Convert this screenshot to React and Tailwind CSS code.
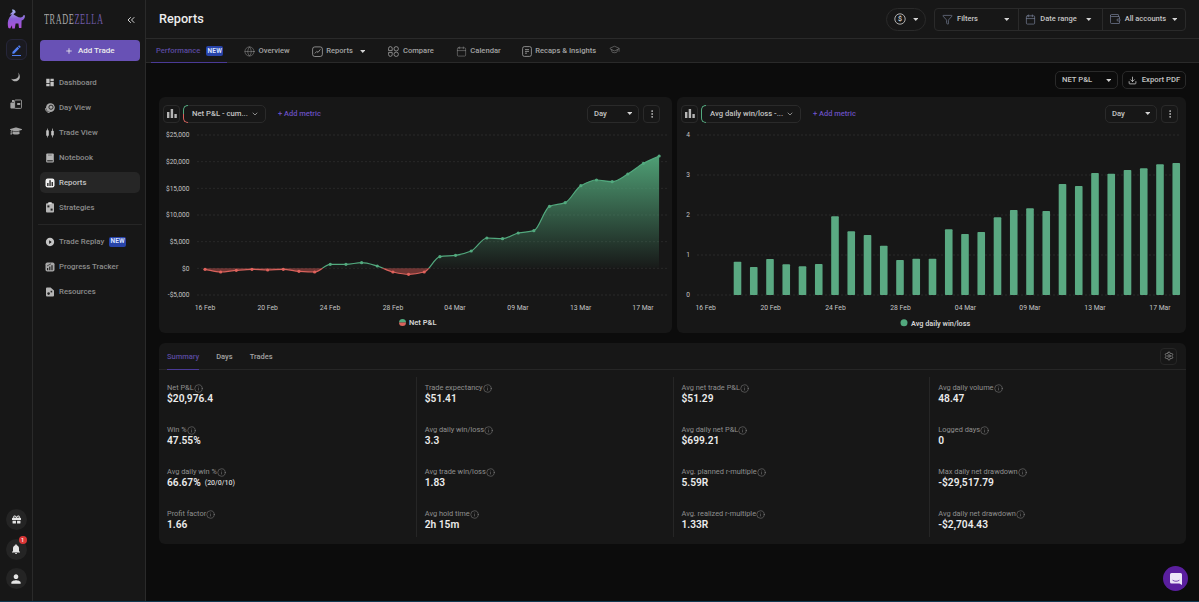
import React from 'react';
import { Plus, ChevronsLeft, ChevronDown, Globe, Calendar, GraduationCap, Funnel, Wallet, Download, EllipsisVertical, Info, Settings } from 'lucide-react';
import { MdDashboard, MdPlayCircleFilled, MdNotifications, MdPerson, MdEdit } from 'react-icons/md';
import { FaGift, FaGraduationCap } from 'react-icons/fa';

const Caret = ({ className = '' }) => (
    <svg width="5.5" height="3" viewBox="0 0 7 4" className={`shrink-0 ${className}`}><path d="M0 0h7L3.5 4z" fill="#d4d4d4" /></svg>
);

const BarsIcon = () => (
    <svg width="10" height="9" viewBox="0 0 10 9" fill="#b5b5b5"><rect x="0" y="3" width="2.4" height="6" /><rect x="3.7" y="0" width="2.4" height="9" /><rect x="7.4" y="5" width="2.4" height="4" /></svg>
);

// sidebar glyphs
const DayViewIcon = () => (
    <svg width="10" height="10" viewBox="0 0 10 10"><circle cx="5.4" cy="4.6" r="4.4" fill="#a8a8a8" /><circle cx="6" cy="4.2" r="2.1" fill="none" stroke="#171717" strokeWidth="0.9" /><path d="M0.6 5.2A4 4 0 0 0 4.6 9.6" fill="none" stroke="#a8a8a8" strokeWidth="1" /></svg>
);
const TradeViewIcon = () => (
    <svg width="10" height="10" viewBox="0 0 10 10" fill="#c4c4c4"><rect x="1.2" y="2.2" width="2.6" height="5.6" rx="0.6" /><rect x="2.2" y="0.6" width="0.7" height="8.8" /><rect x="6.2" y="2.8" width="2.6" height="4.6" rx="0.6" /><rect x="7.2" y="0.6" width="0.7" height="8.8" /></svg>
);
const NotebookIcon = () => (
    <svg width="10" height="10" viewBox="0 0 10 10"><rect x="1.2" y="0.4" width="7.6" height="9.2" rx="1" fill="#b5b5b5" /><rect x="2.2" y="7.2" width="5.6" height="1.2" fill="#2a2a2a" /><rect x="3" y="1.6" width="3.8" height="1" fill="#7a7a7a" /></svg>
);
const ReportsIcon = () => (
    <svg width="10" height="10" viewBox="0 0 10 10"><rect x="0.5" y="0.5" width="9" height="9" rx="2.2" fill="#f2f2f2" /><rect x="2.2" y="5" width="1.3" height="3" fill="#1f1f1f" /><rect x="4.4" y="2.2" width="1.3" height="5.8" fill="#1f1f1f" /><rect x="6.6" y="4" width="1.3" height="4" fill="#1f1f1f" /></svg>
);
const StrategiesIcon = () => (
    <svg width="10" height="11" viewBox="0 0 10 11"><rect x="1" y="1.2" width="8" height="9.4" rx="1" fill="#b5b5b5" /><rect x="3.2" y="0.2" width="3.6" height="1.8" rx="0.5" fill="#e0e0e0" /><rect x="2.4" y="3.4" width="2" height="2" fill="#222" /><rect x="5.6" y="6.6" width="2" height="2" fill="#222" /></svg>
);
const ProgressIcon = () => (
    <svg width="10" height="10" viewBox="0 0 10 10"><rect x="0.5" y="0.5" width="9" height="9" rx="1.8" fill="#a8a8a8" /><rect x="2" y="6" width="1.2" height="2.2" fill="#1f1f1f" /><rect x="4.2" y="4.6" width="1.2" height="3.6" fill="#1f1f1f" /><rect x="6.4" y="3.2" width="1.2" height="5" fill="#1f1f1f" /><path d="M2 4L6 1.8" stroke="#1f1f1f" strokeWidth="0.7" /></svg>
);
const ResourcesIcon = () => (
    <svg width="10" height="10" viewBox="0 0 10 10"><path d="M1 1.6a1 1 0 0 1 1-1h3.6L9 3.6v4.8a1 1 0 0 1-1 1H2a1 1 0 0 1-1-1z" fill="#b5b5b5" /><circle cx="3.6" cy="6.6" r="1.3" fill="#222" /><rect x="5.6" y="3.8" width="1.6" height="1.6" fill="#222" /></svg>
);

// tab glyphs
const ChartTabIcon = () => (
    <svg width="11" height="11" viewBox="0 0 11 11" fill="none" stroke="#a3a3a3" strokeWidth="0.8"><rect x="0.6" y="0.9" width="9.8" height="9.6" rx="2.2" /><path d="M2.8 7.4L4.8 5.4L6 6.4L8.4 3.4" /></svg>
);
const CompareTabIcon = () => (
    <svg width="11" height="11" viewBox="0 0 11 11" fill="none" stroke="#a3a3a3" strokeWidth="0.8"><path d="M0.6 4.6V2.4a1.8 1.8 0 0 1 3.6 0v2.2zM0.6 6.4h3.6v2.2a1.8 1.8 0 0 1-3.6 0z" /><rect x="6" y="0.6" width="4.4" height="4.4" rx="2.2" /><rect x="6" y="6.2" width="4.4" height="4.2" rx="2" /></svg>
);
const RecapsTabIcon = () => (
    <svg width="10" height="11" viewBox="0 0 10 11" fill="none" stroke="#a3a3a3" strokeWidth="0.8"><rect x="0.6" y="0.6" width="8.8" height="9.8" rx="1.8" /><path d="M3 3.6h4M3 5.4h4M3 7.2h2" /></svg>
);

const Logo = () => (
    <svg width="20" height="22" viewBox="0 0 20 22">
        <defs>
            <linearGradient id="logoGrad" x1="0" y1="0" x2="0" y2="1">
                <stop offset="0" stopColor="#a9bcf0" />
                <stop offset="0.5" stopColor="#8a5fd6" />
                <stop offset="1" stopColor="#b04fd8" />
            </linearGradient>
        </defs>
        <path d="M6 1.5C8 1 10 2.4 9.6 4.6L7.4 6.2C9 7.6 12 9.4 14.6 9.4C16 9.4 17.4 8.4 17.6 7L19 7.4C19 10.4 17.4 12 15.6 12.4L15.4 20H13L12.4 15.6L9.6 15.4L8.8 20.6H6.2L6 17.2L4.2 20.4L2.4 20C1.4 16.6 1.4 12.4 3.4 9.4C4.4 8 5.4 7.4 5.8 6.2L3.6 6.4L6.6 3.8z" fill="url(#logoGrad)" />
    </svg>
);

const navTop = [
    { label: 'Dashboard', icon: <MdDashboard size={11} color="#c4c4c4" /> },
    { label: 'Day View', icon: <DayViewIcon /> },
    { label: 'Trade View', icon: <TradeViewIcon /> },
    { label: 'Notebook', icon: <NotebookIcon /> },
    { label: 'Reports', icon: <ReportsIcon />, active: true },
    { label: 'Strategies', icon: <StrategiesIcon /> },
];

const navBottom = [
    { label: 'Trade Replay', icon: <MdPlayCircleFilled size={12} color="#c4c4c4" />, badge: true },
    { label: 'Progress Tracker', icon: <ProgressIcon /> },
    { label: 'Resources', icon: <ResourcesIcon /> },
];

const NewBadge = () => (
    <span className="bg-[#2743a8] text-[#d7e0ff] text-[6.5px] font-bold leading-none rounded-[2px] w-[17px] h-[10px] flex items-center justify-center tracking-[0.2px]">NEW</span>
);

const NavRow = ({ item }) => (
    <div className={`h-[21px] rounded-[5px] flex items-center pl-[5px] ${item.active ? 'bg-[#262626] text-[#c4c4c4]' : 'text-[#8c8c8c]'}`}>
        <span className="w-[10px] flex justify-center shrink-0">{item.icon}</span>
        <span className="ml-[4px] text-[7.8px] font-medium">{item.label}</span>
        {item.badge && <span className="ml-[5px]"><NewBadge /></span>}
    </div>
);

const RoundButton = ({ children }) => (
    <div className="w-[21px] h-[21px] rounded-full bg-[#242424] flex items-center justify-center relative">{children}</div>
);

const Rail = () => (
    <aside className="w-[33px] shrink-0 bg-[#171717] border-r border-[#2a2a2a] flex flex-col items-center">
        <div className="mt-[7px] h-[23px] flex items-center"><Logo /></div>
        <div className="mt-[9px] w-[21px] h-[21px] rounded-[6px] border border-[#26263a] bg-[#1a1a20] flex flex-col items-center justify-center">
            <MdEdit size={11} color="#4f7df0" />
            <span className="w-[9px] h-px bg-[#4f7df0]" />
        </div>
        <div className="mt-[11px] h-[12px] flex items-center">
            <svg width="10" height="10" viewBox="0 0 10 10"><path d="M7 0.6C8.6 3.4 7.6 7.4 2 7.2C0.9 7.2 0.4 6.9 0 6.4C1.4 9 4 9.8 6.2 9C9.4 7.8 9.8 3.4 7 0.6z" fill="#b0b0b0" /></svg>
        </div>
        <div className="mt-[15px] h-[12px] flex items-center">
            <svg width="12" height="10" viewBox="0 0 12 10"><rect x="0.4" y="3.6" width="5.2" height="6" rx="0.8" fill="#a3a3a3" /><rect x="4.6" y="1" width="7" height="8.4" rx="1" fill="#171717" stroke="#a3a3a3" strokeWidth="0.9" /><rect x="2" y="1" width="2" height="2" fill="#a3a3a3" /><rect x="7.2" y="4" width="3" height="2" fill="#a3a3a3" /></svg>
        </div>
        <div className="mt-[15px] h-[12px] flex items-center"><FaGraduationCap size={12} color="#a3a3a3" /></div>
        <div className="mt-auto mb-[12px] flex flex-col gap-[8.5px]">
            <RoundButton><FaGift size={9} color="#e5e5e5" /></RoundButton>
            <RoundButton>
                <MdNotifications size={12} color="#e5e5e5" />
                <span className="absolute -top-[3px] right-0 w-[8px] h-[8px] rounded-full bg-[#d93636] text-white text-[5.5px] leading-[8px] text-center font-medium">1</span>
            </RoundButton>
            <RoundButton><MdPerson size={14} color="#e5e5e5" /></RoundButton>
        </div>
    </aside>
);

const Sidebar = () => (
    <aside className="w-[113px] shrink-0 bg-[#171717] border-r border-[#2a2a2a] pl-[7px] pr-[5.5px]">
        <div className="h-[40px] flex items-center justify-between pl-[4px] pr-[3px]">
            <span className="block w-[60px] [font-family:'Liberation_Serif',serif] text-[14.5px] tracking-[1px] scale-x-[0.57] origin-left text-[#a8a8a8] whitespace-nowrap">TRADE<span className="text-[#6f5aa8]">ZELLA</span></span>
            <ChevronsLeft size={12} color="#d4d4d4" className="shrink-0" />
        </div>
        <div className="h-[21px] rounded-[4px] bg-[#6851b5] flex items-center justify-center gap-[5px] text-[#ececec] text-[8px] font-medium">
            <Plus size={8} strokeWidth={2.5} />
            <span>Add Trade</span>
        </div>
        <div className="mt-[11px] flex flex-col gap-[4px]">
            {navTop.map(item => <NavRow key={item.label} item={item} />)}
        </div>
        <div className="my-[6px] -mx-[2px] h-px bg-[#262626]" />
        <div className="flex flex-col gap-[4px]">
            {navBottom.map(item => <NavRow key={item.label} item={item} />)}
        </div>
    </aside>
);

const Header = () => (
    <header className="h-[39px] shrink-0 bg-[#171717] border-b border-[#2a2a2a] flex items-center pl-[13px] pr-[13px]">
        <h1 className="text-[12.7px] font-medium text-[#ececec] pb-px">Reports</h1>
        <div className="ml-auto flex items-center gap-[8px]">
            <div className="w-[40px] h-[23px] rounded-full border border-[#2a2a2a] flex items-center justify-center gap-[7px]">
                <svg width="12" height="12" viewBox="0 0 12 12"><circle cx="6" cy="6" r="5.2" fill="none" stroke="#bdbdbd" strokeWidth="0.9" /><text x="6" y="8.4" textAnchor="middle" fontSize="7" fontWeight="600" fill="#d4d4d4">$</text></svg>
                <Caret />
            </div>
            <div className="h-[23px] w-[252px] rounded-[4px] border border-[#2a2a2a] grid grid-cols-3 text-[7.5px] font-medium text-[#c4c4c4]">
                <div className="flex items-center pl-[7px] pr-[9px]">
                    <Funnel size={11} color="#7d86a0" strokeWidth={1.4} />
                    <span className="ml-[4px]">Filters</span>
                    <Caret className="ml-auto" />
                </div>
                <div className="flex items-center pl-[6px] pr-[10px] border-l border-[#2a2a2a]">
                    <Calendar size={11} color="#7d86a0" strokeWidth={1.4} />
                    <span className="ml-[4px]">Date range</span>
                    <Caret className="ml-auto" />
                </div>
                <div className="flex items-center pl-[6px] pr-[8px] border-l border-[#2a2a2a]">
                    <Wallet size={12} color="#7d86a0" strokeWidth={1.3} />
                    <span className="ml-[4px]">All accounts</span>
                    <Caret className="ml-auto" />
                </div>
            </div>
        </div>
    </header>
);

const TabLink = ({ icon, label, caret, className }) => (
    <div className={`flex items-center gap-[3.5px] pt-px ${className}`}>
        {icon}
        <span>{label}</span>
        {caret && <Caret className="ml-[3.5px]" />}
    </div>
);

const Tabs = () => (
    <nav className="h-[24px] shrink-0 bg-[#171717] border-b border-[#2a2a2a] flex items-stretch pl-[5px] text-[7.6px] font-medium text-[#a3a3a3]">
        <div className="w-[76px] border-b-[1.5px] border-[#4a3a96] -mb-px flex items-center gap-[6px] pl-[5px] pt-px text-[#5a4aa0]">
            <span>Performance</span>
            <NewBadge />
        </div>
        <TabLink icon={<Globe size={11} strokeWidth={1} />} label="Overview" className="ml-[17px]" />
        <TabLink icon={<ChartTabIcon />} label="Reports" caret className="ml-[22px]" />
        <TabLink icon={<CompareTabIcon />} label="Compare" className="ml-[23px]" />
        <TabLink icon={<Calendar size={11} strokeWidth={1} />} label="Calendar" className="ml-[22px]" />
        <TabLink icon={<RecapsTabIcon />} label="Recaps & Insights" className="ml-[21px]" />
        <div className="ml-[13px] flex items-center -mt-[2px]"><GraduationCap size={11} strokeWidth={1} /></div>
    </nav>
);

const monotonePath = (pts) => {
    const n = pts.length;
    const dx = [], m = [], t = [];
    for (let i = 0; i < n - 1; i++) {
        dx[i] = pts[i + 1][0] - pts[i][0];
        m[i] = (pts[i + 1][1] - pts[i][1]) / dx[i];
    }
    t[0] = m[0];
    t[n - 1] = m[n - 2];
    for (let i = 1; i < n - 1; i++) {
        t[i] = m[i - 1] * m[i] <= 0 ? 0 : 2 * m[i - 1] * m[i] / (m[i - 1] + m[i]);
    }
    let d = `M${pts[0][0]} ${pts[0][1]}`;
    for (let i = 0; i < n - 1; i++) {
        const h = dx[i] / 3;
        d += `C${pts[i][0] + h} ${pts[i][1] + t[i] * h} ${pts[i + 1][0] - h} ${pts[i + 1][1] - t[i + 1] * h} ${pts[i + 1][0]} ${pts[i + 1][1]}`;
    }
    return d;
};

const pnlTops = [433, 441, 436, 433, 435, 433, 439, 441, 418, 418, 413, 423, 441, 448, 441, 395, 391, 378, 339, 341, 324, 317, 244, 233, 182, 165, 170, 147, 115, 93];
const pnlPoints = pnlTops.map((z, i) => [205 + i * 15.66, 125 + z / 3]);
const zeroY = 268.3;
const pnlLine = monotonePath(pnlPoints);
const pnlAreaUp = `${pnlLine}L659 ${zeroY}L205 ${zeroY}Z`;
const pnlAreaDown = `${pnlLine}L659 268L205 268Z`;

const NetPnlChart = () => {
    const yTicks = [['$25,000', 135], ['$20,000', 161.7], ['$15,000', 188.3], ['$10,000', 215], ['$5,000', 241.7], ['$0', 268.3], ['-$5,000', 295]];
    const xTicks = [['16 Feb', 205], ['20 Feb', 267.6], ['24 Feb', 330], ['28 Feb', 393], ['04 Mar', 455], ['09 Mar', 518], ['13 Mar', 580.6], ['17 Mar', 643]];
    return (
        <svg viewBox="159 130 513 203" width="513" height="203" className="block">
            <defs>
                <linearGradient id="pnlGreen" gradientUnits="userSpaceOnUse" x1="0" y1="156" x2="0" y2="268">
                    <stop offset="0" stopColor="#4f9f75" stopOpacity="1" />
                    <stop offset="1" stopColor="#4f9f75" stopOpacity="0.02" />
                </linearGradient>
                <clipPath id="aboveZero"><rect x="159" y="130" width="513" height="138.3" /></clipPath>
                <clipPath id="belowZero"><rect x="159" y="268.3" width="513" height="64" /></clipPath>
            </defs>
            {yTicks.map(([label, y]) => (
                <g key={label}>
                    <line x1="197" x2="667" y1={y} y2={y} stroke="#303030" strokeWidth="0.7" strokeDasharray="2 2" />
                    <text x="189.5" y={y + 2.4} textAnchor="end" fontSize="6.6" fill="#c4c4c4">{label}</text>
                </g>
            ))}
            {xTicks.map(([label, x]) => (
                <text key={label} x={x} y="309.5" textAnchor="middle" fontSize="6.8" fill="#c4c4c4">{label}</text>
            ))}
            <path d={pnlAreaUp} fill="url(#pnlGreen)" clipPath="url(#aboveZero)" />
            <path d={pnlAreaDown} fill="#c9544f" fillOpacity="0.5" clipPath="url(#belowZero)" />
            <path d={pnlLine} fill="none" stroke="#52a97e" strokeWidth="1.2" clipPath="url(#aboveZero)" />
            <path d={pnlLine} fill="none" stroke="#d9625c" strokeWidth="1.2" clipPath="url(#belowZero)" />
            {pnlPoints.map(([x, y]) => (
                <circle key={x} cx={x} cy={y} r="1.6" fill={y > zeroY ? '#e0625c' : '#52a97e'} />
            ))}
            <path d="M399 322.5a3.5 3.5 0 0 1 7 0z" fill="#52a97e" />
            <path d="M399 322.5a3.5 3.5 0 0 0 7 0z" fill="#d9625c" />
            <text x="409" y="325.3" fontSize="7.5" fontWeight="600" fill="#d4d4d4">Net P&amp;L</text>
        </svg>
    );
};

const winLossTops = [500, 516, 492, 508, 514, 507, 364, 409, 420, 452, 495, 491, 491, 403, 417, 411, 367, 345, 340, 348, 267, 273, 234, 236, 225, 220, 208, 204];

const WinLossChart = () => {
    const yTicks = [['4', 135], ['3', 175], ['2', 215], ['1', 255], ['0', 295]];
    const xTicks = [['16 Feb', 705.7], ['20 Feb', 770.7], ['24 Feb', 835.5], ['28 Feb', 900.5], ['04 Mar', 965.5], ['09 Mar', 1030], ['13 Mar', 1095], ['17 Mar', 1160]];
    return (
        <svg viewBox="677 130 509 203" width="509" height="203" className="block">
            {yTicks.map(([label, y]) => (
                <g key={label}>
                    <line x1="697" x2="1181" y1={y} y2={y} stroke="#303030" strokeWidth="0.7" strokeDasharray="2 2" />
                    <text x="688" y={y + 2.4} textAnchor="middle" fontSize="6.6" fill="#c4c4c4">{label}</text>
                </g>
            ))}
            {xTicks.map(([label, x]) => (
                <text key={label} x={x} y="309.5" textAnchor="middle" fontSize="6.8" fill="#c4c4c4">{label}</text>
            ))}
            {winLossTops.map((z, i) => {
                const top = 95 + z / 3;
                return <rect key={i} x={733.7 + i * 16.25} y={top} width="7.6" height={295 - top} rx="0.8" fill="#5aa982" />;
            })}
            <circle cx="904" cy="322.7" r="3.5" fill="#52a97e" />
            <text x="911" y="325.5" fontSize="7.3" fontWeight="600" fill="#d4d4d4">Avg daily win/loss</text>
        </svg>
    );
};

const ChartCard = ({ metric, bottomBracket, boxWidth, rightPad, children }) => (
    <section className="bg-[#171717] rounded-[6px]">
        <div className={`h-[33px] flex items-center pl-[4px] ${rightPad}`}>
            <div className="w-[17px] h-[18px] rounded-[4px] border border-[#2a2a2a] flex items-center justify-center"><BarsIcon /></div>
            <div className={`ml-[3px] h-[18px] rounded-[5px] border border-[#2a2a2a] relative flex items-center pl-[8px] pr-[6px] text-[7.7px] font-medium text-[#c4c4c4] whitespace-nowrap ${boxWidth}`}>
                <span className="absolute -left-px -top-px h-[9px] w-[5px] rounded-tl-[5px] border-l-[1.5px] border-t border-[#52a97e]" />
                <span className={`absolute -left-px -bottom-px h-[9px] w-[5px] rounded-bl-[5px] border-l-[1.5px] border-b ${bottomBracket}`} />
                <span>{metric}</span>
                <ChevronDown size={8} className="ml-auto shrink-0" />
            </div>
            <span className="ml-[12px] text-[7.5px] font-medium text-[#6a4fc0]">+ Add metric</span>
            <div className="ml-auto w-[52px] h-[18px] rounded-[5px] border border-[#2a2a2a] flex items-center pl-[6px] pr-[6px] text-[7.7px] font-medium text-[#c4c4c4]">
                <span>Day</span>
                <Caret className="ml-auto" />
            </div>
            <div className="ml-[4px] w-[17px] h-[18px] rounded-[4px] border border-[#2a2a2a] flex items-center justify-center"><EllipsisVertical size={10} color="#c4c4c4" /></div>
        </div>
        {children}
    </section>
);

const stats = [
    [['Net P&L', '$20,976.4'], ['Win %', '47.55%'], ['Avg daily win %', '66.67%', '(20/0/10)'], ['Profit factor', '1.66']],
    [['Trade expectancy', '$51.41'], ['Avg daily win/loss', '3.3'], ['Avg trade win/loss', '1.83'], ['Avg hold time', '2h 15m']],
    [['Avg net trade P&L', '$51.29'], ['Avg daily net P&L', '$699.21'], ['Avg. planned r-multiple', '5.59R'], ['Avg. realized r-multiple', '1.33R']],
    [['Avg daily volume', '48.47'], ['Logged days', '0'], ['Max daily net drawdown', '-$29,517.79'], ['Avg daily net drawdown', '-$2,704.43']],
];

const Stat = ({ label, value, extra }) => (
    <div className="h-[42px] pt-[6px]">
        <div className="flex items-center h-[10px] text-[7.4px] text-[#8f8f8f] leading-none whitespace-nowrap">
            <span>{label}</span>
            <Info size={9} strokeWidth={1.1} color="#a3a3a3" className="shrink-0" />
        </div>
        <div className="flex items-center h-[13px] text-[10.2px] font-semibold text-[#ececec] leading-none whitespace-nowrap">
            <span>{value}</span>
            {extra && <span className="ml-[4px] text-[7px] font-medium text-[#d4d4d4]">{extra}</span>}
        </div>
    </div>
);

const Summary = () => (
    <section className="mt-[10px] h-[201px] bg-[#171717] rounded-[6px]">
        <div className="h-[27px] border-b border-[#262626] flex items-stretch pl-[8px] pr-[9px] text-[7.5px] font-medium text-[#a3a3a3]">
            <div className="border-b-[1.5px] border-[#4a3a96] -mb-px flex items-center pt-[2px] text-[#5a4aa0]">Summary</div>
            <div className="ml-[17px] flex items-center pt-[2px]">Days</div>
            <div className="ml-[17px] flex items-center pt-[2px]">Trades</div>
            <div className="ml-auto flex items-center">
                <div className="w-[17px] h-[17px] rounded-[4px] border border-[#262626] flex items-center justify-center"><Settings size={10} strokeWidth={1.2} color="#c4c4c4" /></div>
            </div>
        </div>
        <div className="mt-[7px] grid grid-cols-4">
            {stats.map((col, i) => (
                <div key={i} className={`h-[160px] pl-[8px] ${i > 0 ? 'border-l border-[#262626]' : ''}`}>
                    {col.map(([label, value, extra]) => <Stat key={label} label={label} value={value} extra={extra} />)}
                </div>
            ))}
        </div>
    </section>
);

export default function App() {
    return (
        <div className="relative w-[1199px] h-[602px] overflow-hidden bg-[#0c0c0c] [font-family:Roboto,sans-serif] flex flex-col">
            <div className="flex-1 min-h-0 flex">
                <Rail />
                <Sidebar />
                <main className="flex-1 min-w-0 flex flex-col">
                    <Header />
                    <Tabs />
                    <div className="px-[13px] pt-[8px]">
                        <div className="flex justify-end gap-[4px] h-[18px] text-[7.7px] font-medium text-[#c4c4c4]">
                            <div className="w-[63px] rounded-[5px] border border-[#2a2a2a] flex items-center pl-[6px] pr-[6px]">
                                <span>NET P&amp;L</span>
                                <Caret className="ml-auto" />
                            </div>
                            <div className="w-[64px] rounded-[5px] border border-[#2a2a2a] flex items-center justify-center gap-[5px]">
                                <Download size={9} strokeWidth={2.2} />
                                <span>Export PDF</span>
                            </div>
                        </div>
                        <div className="mt-[8px] flex gap-[5px]">
                            <div className="w-[513px]">
                                <ChartCard metric="Net P&L - cum..." bottomBracket="border-[#d9625c]" boxWidth="w-[83px]" rightPad="pr-[12px]"><NetPnlChart /></ChartCard>
                            </div>
                            <div className="w-[509px]">
                                <ChartCard metric="Avg daily win/loss -..." bottomBracket="border-[#52a97e]" boxWidth="w-[100px]" rightPad="pr-[8px]"><WinLossChart /></ChartCard>
                            </div>
                        </div>
                        <Summary />
                    </div>
                </main>
            </div>
            <div className="h-px shrink-0 bg-[#123a52]" />
            <div className="absolute left-[1163px] top-[566px] w-[25px] h-[25px] rounded-full bg-[#5a1f9e] flex items-center justify-center">
                <svg width="12" height="12" viewBox="0 0 12 12"><path d="M1.5 0h9A1.5 1.5 0 0 1 12 1.5V12l-2.6-1.6H1.5A1.5 1.5 0 0 1 0 8.9V1.5A1.5 1.5 0 0 1 1.5 0z" fill="#ece6f7" /><path d="M2.6 7.2C4.6 8.6 7.4 8.6 9.4 7.2" fill="none" stroke="#5a1f9e" strokeWidth="0.8" /></svg>
            </div>
        </div>
    );
}
